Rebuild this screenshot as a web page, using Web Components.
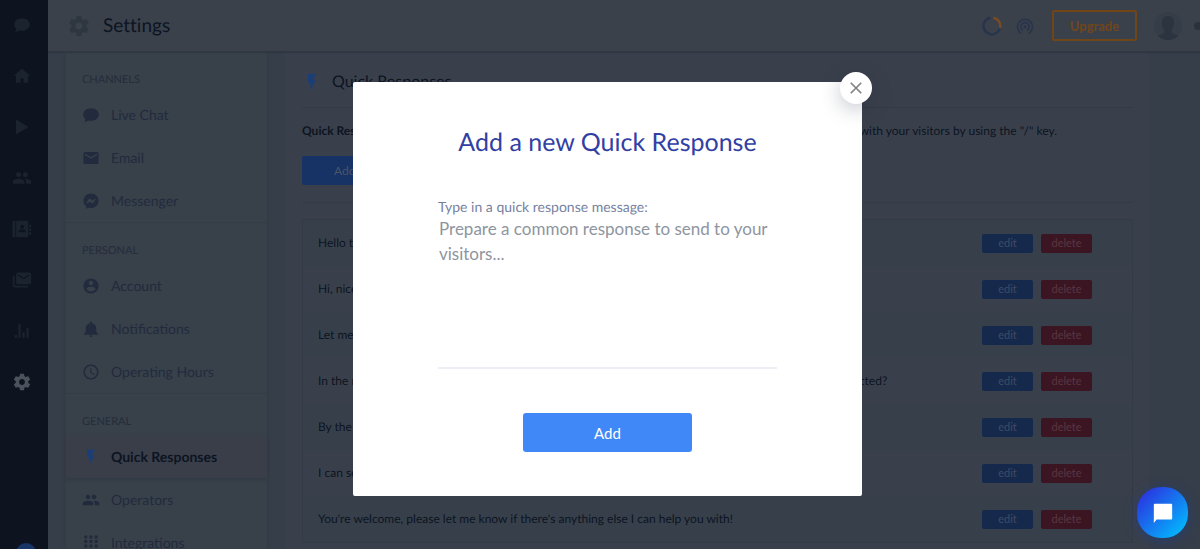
<!DOCTYPE html>
<html lang="en">
<head>
<meta charset="utf-8">
<meta name="viewport" content="width=device-width, initial-scale=1">
<title>Settings – Quick Responses</title>
<style>
  html, body { margin: 0; height: 100%; }
  body {
    font-family: Lato, "Open Sans", sans-serif;
    text-rendering: geometricPrecision;
    --rail: #0d1420;
    --page: #363e4a;
    --panel: #3a404b;
    --nav: #38404a;
    --line: #333b47;
    --ink: #0c1422;
    --muted: #222b3d;
    --blue: #15294d;
  }
</style>
</head>
<body>
<settings-app></settings-app>
<modal-dialog heading="Add a new Quick Response">
  <response-form></response-form>
</modal-dialog>
<chat-launcher></chat-launcher>

<script>
const ICONS = {
  chat: '<path d="M12 3C6.2 3 1.6 6.7 1.6 11.4c0 2.4 1.100 4.400 2.900 5.900-.1 1.400-.7 2.800-1.700 3.900 2 0 4-.6 5.600-1.900 1.100.3 2.300.500 3.600.500 5.800 0 10.400-3.700 10.400-8.400S17.800 3 12 3z"/>',
  home: '<path d="M10 21v-6h4v6h6v-9h3L12 2 1 12h3v9z"/>',
  play: '<path d="M4 2v20l17-10z"/>',
  people: '<path d="M16 11c1.660 0 2.990-1.340 2.990-3S17.660 5 16 5s-3 1.340-3 3 1.340 3 3 3zm-8 0c1.660 0 2.990-1.340 2.990-3S9.660 5 8 5 5 6.340 5 8s1.340 3 3 3zm0 2c-2.330 0-7 1.170-7 3.500V19h14v-2.500c0-2.330-4.670-3.500-7-3.500zm8 0c-.29 0-.62.020-.97.050 1.160.84 1.970 1.970 1.970 3.450V19h6v-2.500c0-2.330-4.670-3.500-7-3.500z"/>',
  contacts: '<path fill-rule="evenodd" d="M2 2h2v20H2a1.500 1.500 0 0 1-1.500-1.500v-17A1.500 1.500 0 0 1 2 2zm3 0h13a1.500 1.500 0 0 1 1.500 1.500v17A1.500 1.500 0 0 1 18 22H5zm7.200 5a2.300 2.300 0 1 0 0 4.600 2.300 2.300 0 0 0 0-4.600zM7.800 16h8.800v-1c0-1.500-2.900-2.300-4.400-2.300S7.800 13.500 7.800 15zM20.500 7H23v3h-2.500zm0 4.500H23v3h-2.500zm0 4.500H23v3h-2.500z"/>',
  mails: '<path fill-rule="evenodd" d="M7 3h14a2 2 0 0 1 2 2v10a2 2 0 0 1-2 2H7a2 2 0 0 1-2-2V5a2 2 0 0 1 2-2zm0 2v1.500l7 4.500 7-4.500V5l-7 4.500zM1 7h2v12h16v2H3a2 2 0 0 1-2-2z"/>',
  bars: '<path d="M1 18h3.500v4H1zm5.500-16H10v20H6.500zm6 12H16v8h-3.500zm6-6H22v14h-3.500z"/>',
  gear: '<path d="M19.430 12.980c.04-.32.07-.64.07-.98s-.03-.66-.07-.98l2.110-1.650c.19-.15.24-.42.12-.64l-2-3.460c-.12-.22-.39-.3-.61-.22l-2.490 1c-.52-.4-1.080-.73-1.690-.98l-.38-2.650C14.460 2.180 14.250 2 14 2h-4c-.25 0-.46.18-.49.42l-.38 2.650c-.61.25-1.170.59-1.690.98l-2.490-1c-.23-.09-.49 0-.61.22l-2 3.460c-.13.22-.07.49.12.64l2.110 1.650c-.04.32-.07.65-.07.98s.03.66.07.98l-2.110 1.650c-.19.15-.24.42-.12.64l2 3.460c.12.22.39.3.61.22l2.490-1c.52.4 1.080.73 1.690.98l.38 2.650c.03.24.24.42.49.42h4c.25 0 .46-.18.49-.42l.38-2.650c.61-.25 1.170-.59 1.690-.98l2.490 1c.23.09.49 0 .61-.22l2-3.460c.12-.22.07-.49-.12-.64l-2.110-1.650zM12 15.500c-1.930 0-3.500-1.570-3.500-3.500s1.570-3.500 3.500-3.500 3.500 1.570 3.500 3.500-1.570 3.500-3.500 3.500z"/>',
  mail: '<path d="M20 4H4c-1.100 0-1.990.9-1.990 2L2 18c0 1.100.9 2 2 2h16c1.100 0 2-.9 2-2V6c0-1.100-.9-2-2-2zm0 4l-8 5-8-5V6l8 5 8-5v2z"/>',
  messenger: '<path fill-rule="evenodd" d="M12 2C6.400 2 2 6.100 2 11.700c0 2.900 1.200 5.400 3.200 7.100.2.200.3.400.3.600v1.800c0 .6.6 1 1.100.7l2-.9c.2-.1.300-.1.500 0 .9.200 1.900.4 2.900.4 5.600 0 10-4.100 10-9.700S17.600 2 12 2zM6 14.500l3-4.700c.4-.7 1.500-.9 2.200-.4l2.300 1.800c.2.100.5.100.7 0L17.400 9c.4-.4 1 .1.700.6l-3 4.700c-.4.700-1.500.9-2.200.4l-2.300-1.800c-.2-.1-.5-.1-.7 0l-3.200 2.300c-.4.300-1-.2-.7-.7z"/>',
  account: '<path d="M12 2C6.480 2 2 6.480 2 12s4.480 10 10 10 10-4.480 10-10S17.520 2 12 2zm0 3c1.660 0 3 1.340 3 3s-1.340 3-3 3-3-1.340-3-3 1.340-3 3-3zm0 14.200c-2.500 0-4.710-1.280-6-3.220.03-1.990 4-3.080 6-3.080 1.990 0 5.970 1.090 6 3.080-1.290 1.940-3.500 3.220-6 3.220z"/>',
  bell: '<path d="M12 22.500c1.100 0 2-.9 2-2h-4c0 1.100.89 2 2 2zm7-6.500v-5c0-3.300-1.900-6-5.500-6.700V3.500C13.500 2.670 12.830 2 12 2s-1.500.67-1.500 1.500v.8C6.900 5 5 7.700 5 11v5l-2.500 2.500v1h19v-1L19 16z"/>',
  clock: '<path d="M11.990 2C6.470 2 2 6.480 2 12s4.470 10 9.990 10C17.520 22 22 17.520 22 12S17.520 2 11.990 2zM12 20c-4.420 0-8-3.580-8-8s3.580-8 8-8 8 3.580 8 8-3.580 8-8 8zm.5-13H11v6l5.250 3.150.75-1.230-4.500-2.670z"/>',
  bolt: '<path d="M7 2v11h3v9l7-12h-4l4-8z"/>',
  grid: '<path d="M3 2h4v4H3zm7 0h4v4h-4zm7 0h4v4h-4zM3 8h4v4H3zm7 0h4v4h-4zm7 0h4v4h-4zM3 14h4v4H3zm7 0h4v4h-4zm7 0h4v4h-4zM3 20h4v4H3zm7 0h4v4h-4zm7 0h4v4h-4z"/>',
  tether: '<path d="M12 11c-1.100 0-2 .9-2 2s.9 2 2 2 2-.9 2-2-.9-2-2-2zm6 2c0-3.310-2.690-6-6-6s-6 2.690-6 6c0 2.220 1.210 4.150 3 5.190l1-1.740c-1.190-.7-2-1.970-2-3.450 0-2.210 1.790-4 4-4s4 1.790 4 4c0 1.480-.81 2.750-2 3.450l1 1.740c1.790-1.040 3-2.970 3-5.190zM12 3C6.480 3 2 7.480 2 13c0 3.700 2.010 6.920 4.990 8.650l1-1.730C5.610 18.530 4 15.960 4 13c0-4.420 3.580-8 8-8s8 3.580 8 8c0 2.960-1.610 5.530-4 6.920l1 1.730c2.990-1.730 5-4.950 5-8.650 0-5.520-4.480-10-10-10z"/>',
  donut: '<g fill="none" stroke-width="3"><path stroke="currentColor" d="M21.200 15.400A10 10 0 1 1 10.300 2.200"/><path stroke="#774b24" d="M13.600 2.200A10 10 0 0 1 21.800 14"/></g>',
  close: '<path d="M3 3l18 18M21 3L3 21" fill="none" stroke="currentColor" stroke-width="2.800"/>',
  bubble: '<path d="M3 2h18a1 1 0 0 1 1 1v15a1 1 0 0 1-1 1H5l-3 4V3a1 1 0 0 1 1-1z"/>'
};

function define(name, html, setup) {
  const template = document.createElement('template');
  template.innerHTML = html;
  customElements.define(name, class extends HTMLElement {
    connectedCallback() {
      if (this.shadowRoot) return;
      const root = this.attachShadow({ mode: 'open' });
      root.append(template.content.cloneNode(true));
      if (setup) setup(this, root);
    }
  });
}

define('app-icon', `
  <style>
    :host { display: inline-block; flex: none; width: var(--icon, 18px); height: var(--icon, 18px); }
    svg { display: block; width: 100%; height: 100%; fill: currentColor; }
  </style>
  <svg viewBox="0 0 24 24" aria-hidden="true"></svg>`,
  (el, root) => { root.querySelector('svg').innerHTML = ICONS[el.getAttribute('name')]; });

define('icon-rail', `
  <style>
    :host { display: block; flex: none; width: 48px; background: var(--rail); overflow: hidden; }
    nav { display: flex; flex-direction: column; height: 100%; }
    a { display: flex; flex: none; align-items: center; justify-content: center; height: 51px; box-sizing: border-box;
        padding: 0 5px 2px 0; color: #1b232f; }
    a.active { color: #4a525b; }
    .status { flex: none; width: 20px; height: 20px; margin: auto 0 -14px 16px; border-radius: 50%; background: #173567; }
  </style>
  <nav aria-label="Main">
    <a href="#chats" aria-label="Chats"><app-icon name="chat"></app-icon></a>
    <a href="#home" aria-label="Home"><app-icon name="home"></app-icon></a>
    <a href="#play" aria-label="Tour"><app-icon name="play"></app-icon></a>
    <a href="#people" aria-label="Visitors"><app-icon name="people" style="--icon:20px"></app-icon></a>
    <a href="#contacts" aria-label="Contacts"><app-icon name="contacts" style="--icon:20px"></app-icon></a>
    <a href="#mail" aria-label="Mailbox"><app-icon name="mails" style="--icon:20px"></app-icon></a>
    <a href="#reports" aria-label="Reports"><app-icon name="bars" style="--icon:16px"></app-icon></a>
    <a class="active" href="#settings" aria-label="Settings"><app-icon name="gear" style="--icon:20px"></app-icon></a>
    <span class="status"></span>
  </nav>`);

define('page-header', `
  <style>
    :host { display: flex; flex: none; align-items: center; height: 51px; padding-left: 19px; box-sizing: border-box;
            background: #3a414b; box-shadow: 0 2px 1px #2f3743; position: relative; }
    h1 { margin: 0 auto 0 12px; font-size: 19px; line-height: 24px; font-weight: 400; color: var(--ink);
         font-variant-ligatures: none; }
    .gear { color: #2e3640; --icon: 24px; }
    .tools { display: flex; align-items: center; color: #29344c; overflow: hidden; }
    .tools app-icon { margin-right: 13px; --icon: 20px; }
    button { width: 85px; height: 31px; margin: 0 17px 0 4px; border: 2px solid #704518; border-radius: 2px;
             background: none; color: #70461c; font: 700 13px/16px Lato, sans-serif; padding: 0; }
    .avatar { width: 28px; height: 28px; margin-right: 12px; }
    .dot { width: 8px; height: 8px; border-radius: 50%; background: #2b323d; margin-right: -2px; }
  </style>
  <app-icon class="gear" name="gear"></app-icon>
  <h1>Settings</h1>
  <div class="tools">
    <app-icon name="donut"></app-icon>
    <app-icon name="tether"></app-icon>
    <button type="button">Upgrade</button>
    <svg class="avatar" viewBox="0 0 28 28" aria-hidden="true">
      <defs><clipPath id="c"><circle cx="14" cy="14" r="14"/></clipPath></defs>
      <g clip-path="url(#c)"><rect width="28" height="28" fill="#353d48"/>
      <path fill="#2c343f" d="M14 4c4 0 6 2.500 6 6.500 0 3.500-1 6-2.500 8v2.500c3 1 6 2 8 4V29H2.500v-4c2-2 5-3 8-4v-2.500C9 16.500 8 14 8 10.500 8 6.500 10 4 14 4z"/></g>
    </svg>
    <span class="dot"></span>
  </div>`);

define('nav-item', `
  <style>
    :host { display: block; }
    a { display: flex; align-items: center; gap: 11px; height: 43px; padding-left: 16px;
        font-size: 14px; line-height: 18px; color: var(--muted); text-decoration: none; }
    :host([active]) a { background: #3a3e49; color: var(--ink); font-weight: 700; box-shadow: 0 2px 3px #323a45; }
    :host([active]) app-icon { color: #1c3e76; }
  </style>
  <a href="#"><app-icon></app-icon><slot></slot></a>`,
  (el, root) => {
    const name = el.getAttribute('icon');
    const icon = document.createElement('app-icon');
    icon.setAttribute('name', name);
    root.querySelector('app-icon').replaceWith(icon);
    root.querySelector('a').setAttribute('href', '#' + name);
    if (el.hasAttribute('active')) root.querySelector('a').setAttribute('aria-current', 'page');
  });

define('nav-section', `
  <style>
    :host { display: block; border-bottom: 1px solid var(--line); }
    h2 { margin: 0; padding: 20px 16px 5px; font-size: 11px; line-height: 16px; font-weight: 400;
         text-transform: uppercase; color: #242d3a; }
  </style>
  <h2></h2><slot></slot>`,
  (el, root) => { root.querySelector('h2').textContent = el.getAttribute('label'); });

define('settings-nav', `
  <style>
    :host { display: block; flex: none; width: 201px; background: var(--nav); box-shadow: 0 0 3px #303844; }
  </style>
  <nav aria-label="Settings">
    <nav-section label="CHANNELS">
      <nav-item icon="chat">Live Chat</nav-item>
      <nav-item icon="mail">Email</nav-item>
      <nav-item icon="messenger">Messenger</nav-item>
    </nav-section>
    <nav-section label="PERSONAL">
      <nav-item icon="account">Account</nav-item>
      <nav-item icon="bell">Notifications</nav-item>
      <nav-item icon="clock">Operating Hours</nav-item>
    </nav-section>
    <nav-section label="GENERAL">
      <nav-item icon="bolt" active>Quick Responses</nav-item>
      <nav-item icon="people">Operators</nav-item>
      <nav-item icon="grid">Integrations</nav-item>
    </nav-section>
  </nav>`);

define('response-table', `
  <style>
    :host { display: block; }
    table { width: 100%; border-collapse: separate; border-spacing: 0; border: 1px solid var(--line);
            font-size: 12px; line-height: 16px; color: var(--ink); }
    td { height: 46px; padding: 0; }
    td:first-child { padding-left: 15px; white-space: nowrap; }
    td:last-child { width: 150px; }
    tr:nth-child(odd) { background: #37404a; }
    .actions { display: flex; gap: 8px; }
    button { width: 51px; height: 19px; padding: 0; border: 0; border-radius: 2px; background: var(--blue);
             color: #3f4b62; font: 400 11px/16px Lato, sans-serif; }
    .delete { background: #3b1521; color: #5a3642; }
  </style>
  <table><tbody></tbody></table>`,
  (el, root) => {
    const rows = [
      'Hello there, how can I help you today?',
      'Hi, nice to meet you!',
      'Let me check that for you, one moment please.',
      'In the meantime, may I please get your name, email address and phone number in case we get disconnected?',
      'By the way, have you seen our help center?',
      'I can send you more details by email.',
      "You're welcome, please let me know if there's anything else I can help you with!"
    ];
    const body = root.querySelector('tbody');
    for (const text of rows) {
      const row = body.insertRow();
      row.insertCell().textContent = text;
      row.insertCell().innerHTML = '<div class="actions"><button type="button">edit</button><button type="button" class="delete">delete</button></div>';
    }
  });

define('response-panel', `
  <style>
    :host { display: block; flex: 1; min-width: 0; padding: 0 16px 0 17px; background: var(--panel); }
    header { display: flex; align-items: center; gap: 10px; height: 56px; padding-top: 4px; box-sizing: border-box;
             border-bottom: 1px solid var(--line); }
    header app-icon { color: #1c3e76; --icon: 20px; }
    h2 { margin: 0; font-size: 16px; line-height: 20px; font-weight: 400; color: var(--ink); }
    p { display: flex; justify-content: space-between; margin: 15px 0 17px; padding-right: 76px;
        font-size: 12px; line-height: 16px; white-space: nowrap; color: var(--ink); }
    button { display: block; height: 29px; padding: 0 32px; border: 0; border-radius: 2px; background: #173264;
             color: #4a5568; font: 400 12px/16px Lato, sans-serif; }
    hr { margin: 17px 0 16px; border: 0; border-top: 1px solid var(--line); }
  </style>
  <header><app-icon name="bolt"></app-icon><h2>Quick Responses</h2></header>
  <p><b>Quick Responses</b> <span>chat with your visitors by using the "/" key.</span></p>
  <button type="button">Add new</button>
  <hr>
  <response-table></response-table>`);

define('settings-app', `
  <style>
    :host { display: flex; height: 100vh; overflow: hidden; background: var(--page); }
    .main { display: flex; flex: 1; flex-direction: column; min-width: 0; overflow: hidden; }
    .body { display: flex; flex: 1; gap: 18px; min-height: 0; padding: 1px 51px 0 18px; }
  </style>
  <icon-rail></icon-rail>
  <div class="main">
    <page-header></page-header>
    <div class="body">
      <settings-nav></settings-nav>
      <response-panel></response-panel>
    </div>
  </div>`);

define('response-form', `
  <style>
    :host { display: block; }
    form { display: flex; flex-direction: column; }
    label { font-size: 14px; line-height: 18px; color: #76819f; }
    textarea { height: 153px; box-sizing: border-box; padding: 0 1px; border: 0; border-bottom: 2px solid #eeeef5;
               background: none; resize: none; outline: 0; overflow: hidden;
               font: 400 17px/25px Lato, sans-serif; color: #333; }
    textarea::placeholder { color: #8e959f; opacity: 1; }
    button { align-self: center; width: 50%; height: 39px; margin-top: 44px; border: 0; border-radius: 3px;
             background: #4088f7; color: #fff; font: 400 15px/20px Lato, sans-serif; }
  </style>
  <form>
    <label for="message">Type in a quick response message:</label>
    <textarea id="message" placeholder="Prepare a common response to send to your visitors..."></textarea>
    <button type="button">Add</button>
  </form>`);

define('modal-dialog', `
  <style>
    :host { position: fixed; inset: 0; display: flex; align-items: flex-start; justify-content: center;
            padding: 82px 0 0 15px; box-sizing: border-box; }
    section { position: relative; width: 509px; max-width: 100%; padding: 42px 85px 44px; box-sizing: border-box;
              border-radius: 2px; background: #fff; }
    h2 { margin: 0 0 38px; font-size: 25px; line-height: 36px; font-weight: 400; text-align: center;
         white-space: nowrap; color: #3140a2; }
    .close { position: absolute; top: -10px; right: -10px; display: flex; align-items: center; justify-content: center;
             width: 32px; height: 32px; padding: 0; border: 0; border-radius: 50%; background: #fff; color: #808080;
             box-shadow: 0 5px 20px rgba(20, 30, 60, 0.25); --icon: 14px; }
  </style>
  <section role="dialog" aria-modal="true" aria-labelledby="title">
    <h2 id="title"></h2>
    <slot></slot>
    <button class="close" type="button" aria-label="Close"><app-icon name="close"></app-icon></button>
  </section>`,
  (el, root) => { root.querySelector('h2').textContent = el.getAttribute('heading'); });

define('chat-launcher', `
  <style>
    :host { position: fixed; right: 12px; bottom: 11px; display: block; }
    button { display: flex; align-items: center; justify-content: center; width: 51px; height: 51px; padding: 0;
             border: 0; border-radius: 24px; color: #fff; background: linear-gradient(135deg, #2a34e0 10%, #00c0ff 95%);
             box-shadow: 0 2px 12px rgba(20, 60, 160, 0.5); --icon: 22px; }
  </style>
  <button type="button" aria-label="Open chat"><app-icon name="bubble"></app-icon></button>`);
</script>
</body>
</html>
